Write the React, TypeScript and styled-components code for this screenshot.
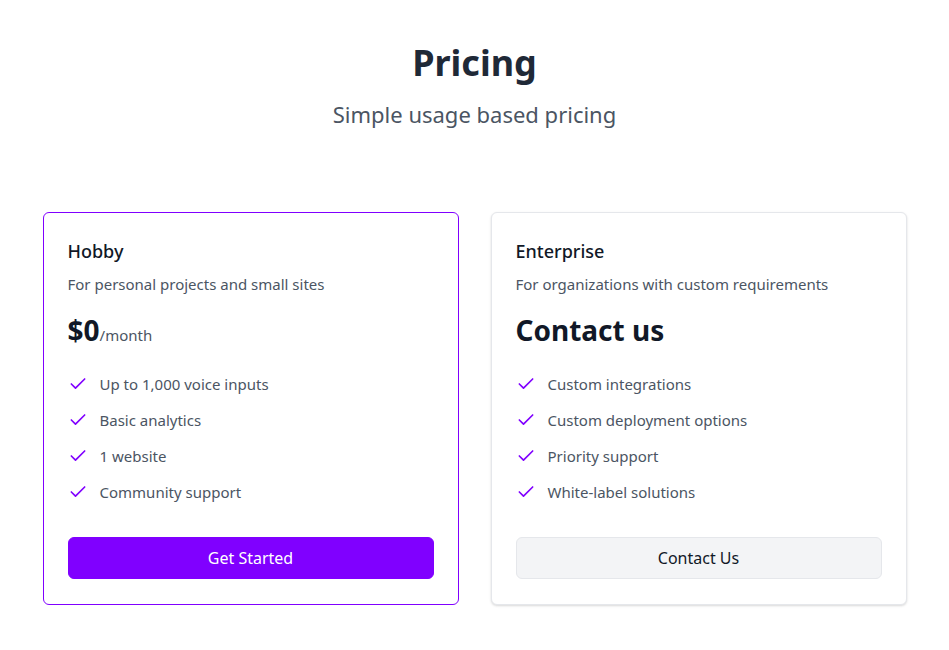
import React from 'react'
import styled, { createGlobalStyle } from 'styled-components'

const GlobalStyle = createGlobalStyle`
	*, *::before, *::after {
		box-sizing: border-box;
	}
	body {
		margin: 0;
		background: #ffffff;
		font-family: 'Noto Sans', 'Open Sans', Arial, sans-serif;
		color: #111827;
	}
`

interface Plan {
	name: string
	description: string
	price?: string
	period?: string
	contact?: string
	features: string[]
	cta: string
	highlighted: boolean
}

const plans: Plan[] = [
	{
		name: 'Hobby',
		description: 'For personal projects and small sites',
		price: '$0',
		period: '/month',
		features: [
			'Up to 1,000 voice inputs',
			'Basic analytics',
			'1 website',
			'Community support',
		],
		cta: 'Get Started',
		highlighted: true,
	},
	{
		name: 'Enterprise',
		description: 'For organizations with custom requirements',
		contact: 'Contact us',
		features: [
			'Custom integrations',
			'Custom deployment options',
			'Priority support',
			'White-label solutions',
		],
		cta: 'Contact Us',
		highlighted: false,
	},
]

const Check = () => (
	<CheckIcon viewBox="0 0 24 24" fill="none" stroke="currentColor" strokeWidth={2} strokeLinecap="round" strokeLinejoin="round">
		<path d="M20 6 9 17l-5-5" />
	</CheckIcon>
)

export default function App() {
	return (
		<>
			<GlobalStyle />
			<Page>
				<Header>
					<Title>Pricing</Title>
					<Subtitle>Simple usage based pricing</Subtitle>
				</Header>
				<Grid>
					{plans.map((plan) => (
						<Card key={plan.name} highlighted={plan.highlighted}>
							<PlanName>{plan.name}</PlanName>
							<PlanDescription>{plan.description}</PlanDescription>
							{plan.price ? (
								<PriceRow>
									<Price>{plan.price}</Price>
									<Period>{plan.period}</Period>
								</PriceRow>
							) : (
								<PriceRow>
									<Price>{plan.contact}</Price>
								</PriceRow>
							)}
							<Features>
								{plan.features.map((f) => (
									<Feature key={f}>
										<Check />
										<span>{f}</span>
									</Feature>
								))}
							</Features>
							<Button primary={plan.highlighted}>{plan.cta}</Button>
						</Card>
					))}
				</Grid>
			</Page>
		</>
	)
}

const Page = styled.main`
	max-width: 896px;
	margin: 0 auto;
	padding: 41px 16px 40px;
`

const Header = styled.div`
	display: flex;
	flex-direction: column;
	align-items: center;
	text-align: center;
`

const Title = styled.h1`
	margin: 0;
	font-size: 36px;
	line-height: 44px;
	font-weight: 700;
	color: #1f2937;
`

const Subtitle = styled.p`
	margin: 15px 0 0;
	font-size: 22px;
	line-height: 28px;
	color: #4b5563;
`

const Grid = styled.div`
	display: grid;
	grid-template-columns: 1fr 1fr;
	gap: 32px;
	margin-top: 84px;
`

const Card = styled.div.withConfig({
	shouldForwardProp: (p) => p !== 'highlighted',
})<{ highlighted: boolean }>`
	display: flex;
	flex-direction: column;
	border-radius: 6px;
	padding: 24px 24px 25px;
	background: #ffffff;
	border: 1px solid ${(p) => (p.highlighted ? '#8000ff' : '#e5e7eb')};
	box-shadow: ${(p) =>
		p.highlighted ? 'none' : '0 1px 3px rgba(0,0,0,0.1), 0 1px 2px rgba(0,0,0,0.06)'};
`

const PlanName = styled.h3`
	margin: 0;
	font-size: 18px;
	line-height: 28px;
	font-weight: 500;
	color: #111827;
`

const PlanDescription = styled.p`
	margin: 9px 0 0;
	font-size: 15px;
	line-height: 20px;
	color: #4b5563;
`

const PriceRow = styled.div`
	display: flex;
	align-items: baseline;
	margin-top: 16px;
	height: 40px;
`

const Price = styled.span`
	font-size: 28px;
	line-height: 40px;
	font-weight: 700;
	color: #111827;
`

const Period = styled.span`
	font-size: 15px;
	color: #4b5563;
`

const Features = styled.ul`
	list-style: none;
	margin: 22px 0 0;
	padding: 0;
	display: flex;
	flex-direction: column;
	gap: 12px;
`

const Feature = styled.li`
	display: flex;
	align-items: center;
	gap: 12px;
	font-size: 15px;
	line-height: 24px;
	color: #4b5563;
`

const CheckIcon = styled.svg`
	width: 20px;
	height: 20px;
	color: #8000ff;
	flex-shrink: 0;
`

const Button = styled.button.withConfig({
	shouldForwardProp: (p) => p !== 'primary',
})<{ primary: boolean }>`
	margin-top: 33px;
	height: 42px;
	width: 100%;
	border-radius: 6px;
	font-family: inherit;
	font-size: 16px;
	cursor: pointer;
	background: ${(p) => (p.primary ? '#8000ff' : '#f3f4f6')};
	color: ${(p) => (p.primary ? '#ffffff' : '#111827')};
	border: 1px solid ${(p) => (p.primary ? '#8000ff' : '#e5e7eb')};
`
